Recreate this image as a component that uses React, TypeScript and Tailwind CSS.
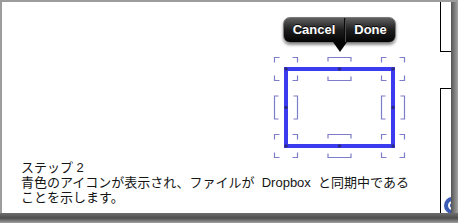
import React from "react";

function Canvas() {
  const hc = "#7d7dc9";
  const blue = "#3b3bef";
  const dot = "#2b2b86";
  // svg origin = page (270,53)
  const L = 16, R = 123, T = 16, B = 93, CX = 69.5, CY = 54.5;
  const h = 11.5;
  const t = 5;
  const corner = (cx: number, cy: number, k: string) => (
    <g key={k} stroke={hc} strokeWidth={1.2} fill="none">
      <path d={`M${cx - h} ${cy - h + t} V${cy - h} H${cx - h + t}`} />
      <path d={`M${cx + h - t} ${cy - h} H${cx + h} V${cy - h + t}`} />
      <path d={`M${cx - h} ${cy + h - t} V${cy + h} H${cx - h + t}`} />
      <path d={`M${cx + h - t} ${cy + h} H${cx + h} V${cy + h - t}`} />
    </g>
  );
  const midH = (cx: number, cy: number, k: string) => (
    <g key={k} stroke={hc} strokeWidth={1.2} fill="none">
      <path d={`M${cx - h} ${cy - h + 4} V${cy - h} H${cx + h} V${cy - h + 4}`} />
      <path d={`M${cx - h} ${cy + h - 4} V${cy + h} H${cx + h} V${cy + h - 4}`} />
    </g>
  );
  const midV = (cx: number, cy: number, k: string) => (
    <g key={k} stroke={hc} strokeWidth={1.2} fill="none">
      <path d={`M${cx - h + 4} ${cy - h} H${cx - h} V${cy + h} H${cx - h + 4}`} />
      <path d={`M${cx + h - 4} ${cy - h} H${cx + h} V${cy + h} H${cx + h - 4}`} />
    </g>
  );
  const dots: [number, number][] = [
    [L, T], [CX, T], [R, T], [L, CY], [R, CY], [L, B], [CX, B], [R, B],
  ];
  return (
    <svg
      width={140}
      height={99}
      viewBox="0 0 140 99"
      className="ml-[268px] overflow-visible block shrink-0"
    >
      {corner(L, T, "tl")}
      {midH(CX, T, "tm")}
      {corner(R, T, "tr")}
      {midV(L, CY, "ml")}
      {midV(R, CY, "mr")}
      {corner(L, B, "bl")}
      {midH(CX, B, "bm")}
      {corner(R, B, "br")}
      <rect x={L} y={T} width={R - L} height={B - T} fill="none" stroke={blue} strokeWidth={4} />
      {dots.map(([x, y], i) => (
        <circle key={i} cx={x} cy={y} r={1.8} fill={dot} />
      ))}
    </svg>
  );
}

export default function App() {
  return (
    <div className="w-[458px] h-[223px] bg-[#9c9c9c] flex flex-col overflow-hidden">
      <div className="h-[2px] shrink-0" />
      <div className="flex h-[211px] shrink-0">
        <div className="w-[2px]" />
        <div className="w-[438px] bg-white flex flex-col">
          <div className="h-[51px] pt-[15px] shrink-0">
            <div className="relative ml-[281px] w-[113px] h-[26px] rounded-[7px] border border-[#7a7a7a] bg-gradient-to-b from-[#606060] via-[#1e1e1e] to-[#050505] shadow-[0_2px_3px_rgba(0,0,0,0.45)] flex text-white font-bold text-[13px] [font-family:'Liberation_Sans',Arial,sans-serif] [text-shadow:0_-1px_0_rgba(0,0,0,0.8)]">
              <div className="w-[61px] flex items-center justify-center border-r border-r-[#0a0a0a]">
                Cancel
              </div>
              <div className="flex-1 flex items-center justify-center border-l border-l-[#4a4a4a]">
                Done
              </div>
              <svg
                width={14}
                height={10}
                viewBox="0 0 14 10"
                className="absolute left-[48.5px] top-[24px]"
              >
                <path d="M0 0 L14 0 L7 10 Z" fill="#050505" />
              </svg>
            </div>
          </div>
          <Canvas />
          <div className="mt-[8px] pl-[19px] text-[13px] leading-[15px] text-[#151515] [font-family:'Liberation_Sans','Noto_Sans_CJK_JP',sans-serif] whitespace-pre">
            <div>ステップ 2</div>
            <div>青色のアイコンが表示され、ファイルが  Dropbox  と同期中である</div>
            <div>ことを示します。</div>
          </div>
        </div>
        <div className="w-[11px] bg-white flex flex-col">
          <div className="h-[50px] border-l border-b border-black" />
          <div className="h-[36px]" />
          <div className="relative flex-1 border-l border-t border-black overflow-hidden">
            <div className="absolute left-[3px] top-[108px] w-[17px] h-[17px] rounded-full bg-[#3b5bb5] flex items-center justify-center">
              <div className="w-[9px] h-[9px] rounded-full border-2 border-white" />
            </div>
          </div>
        </div>
        <div className="w-[7px] bg-gradient-to-r from-[#555555] to-[#a5a5a5]" />
      </div>
      <div className="h-[10px] shrink-0 bg-gradient-to-b from-[#6e6e6e] via-[#4e4e4e] to-[#a0a0a0]" />
    </div>
  );
}
